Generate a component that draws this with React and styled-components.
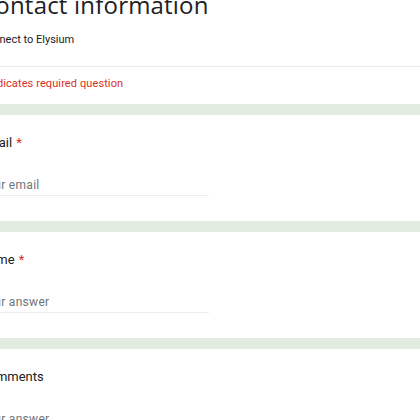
import React from 'react';
import styled, {createGlobalStyle} from 'styled-components';

const GlobalStyle = createGlobalStyle`
    html, body {
        margin: 0;
        padding: 0;
        background: #e1ebdf;
        overflow: hidden;
        font-family: Roboto, "Liberation Sans", Arial, sans-serif;
    }
`;

const Form = styled.div`
    display: flex;
    flex-direction: column;
    gap: 11px;
    width: 506px;
    margin: -33px 0 0 -44px;
`;

const Card = styled.div`
    background: #fff;
`;

const HeaderTop = styled.div`
    padding: 22px 24px 18px;
    border-bottom: 1px solid #e8eaed;
`;

const Title = styled.div`
    font-family: "Open Sans", Roboto, sans-serif;
    font-size: 24px;
    line-height: 32px;
    letter-spacing: 0.2px;
    color: #202124;
    margin-bottom: 11px;
`;

const Description = styled.div`
    font-size: 11px;
    line-height: 16px;
    color: #202124;
`;

const Required = styled.div`
    padding: 9px 24px 12px;
    font-size: 11px;
    line-height: 16px;
    letter-spacing: 0.1px;
    color: #d93025;
`;

const Question = styled(Card)`
    padding: 18px 24px 25px;
`;

const Label = styled.div`
    font-size: 13px;
    line-height: 20px;
    color: #202124;
    margin-bottom: 22px;
`;

const Star = styled.span`
    color: #d93025;
    margin-left: 4px;
`;

const Input = styled.input`
    display: block;
    box-sizing: content-box;
    width: 229px;
    height: 20px;
    padding: 0;
    border: none;
    border-bottom: 1px solid #ececec;
    outline: none;
    font-family: inherit;
    font-size: 12px;
    line-height: 20px;
    letter-spacing: 0.3px;
    color: #202124;
    background: transparent;

    &::placeholder {
        color: #70757a;
    }
`;

const Field = ({label, required, placeholder = 'Your answer'}) => (
    <Question>
        <Label>
            {label}
            {required && <Star>*</Star>}
        </Label>
        <Input placeholder={placeholder}/>
    </Question>
);

const App = () => (
    <>
        <GlobalStyle/>
        <Form>
            <Card>
                <HeaderTop>
                    <Title>Contact information</Title>
                    <Description>Connect to Elysium</Description>
                </HeaderTop>
                <Required>* Indicates required question</Required>
            </Card>
            <Field label="Email" required placeholder="Your email"/>
            <Field label="Name" required/>
            <Field label="Comments"/>
        </Form>
    </>
);

export default App;
